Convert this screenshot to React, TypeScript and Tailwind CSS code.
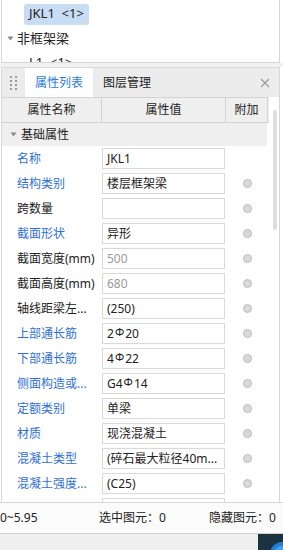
import type { ReactNode } from 'react';

const Rebar = () => <span className="text-[11px] mx-[1px] relative -top-[1px]">Φ</span>;

type Row = { name: string; value: ReactNode; blue?: boolean; muted?: boolean; radio?: boolean };

const rows: Row[] = [
  { name: '名称', value: 'JKL1', blue: true },
  { name: '结构类别', value: '楼层框架梁', blue: true, radio: true },
  { name: '跨数量', value: '', radio: true },
  { name: '截面形状', value: '异形', blue: true, radio: true },
  { name: '截面宽度(mm)', value: '500', muted: true, radio: true },
  { name: '截面高度(mm)', value: '680', muted: true, radio: true },
  { name: '轴线距梁左...', value: '(250)', radio: true },
  { name: '上部通长筋', value: <>2<Rebar />20</>, blue: true, radio: true },
  { name: '下部通长筋', value: <>4<Rebar />22</>, blue: true, radio: true },
  { name: '侧面构造或...', value: <>G4<Rebar />14</>, blue: true, radio: true },
  { name: '定额类别', value: '单梁', blue: true, radio: true },
  { name: '材质', value: '现浇混凝土', blue: true, radio: true },
  { name: '混凝土类型', value: '(碎石最大粒径40m...', blue: true, radio: true },
  { name: '混凝土强度...', value: '(C25)', blue: true, radio: true },
  // partly scrolled out of view: only the top edge of its box shows
  { name: '', value: '', radio: false },
];

function Caret() {
  return (
    <svg width="7" height="5" viewBox="0 0 7 5" className="shrink-0">
      <path d="M0.5 0.5 L6.5 0.5 L3.5 4.5 Z" fill="#8a8a8a" />
    </svg>
  );
}

export default function App() {
  return (
    <div className="w-[283px] h-[550px] bg-white overflow-hidden flex flex-col text-[#222] font-['Noto_Sans','Noto_Sans_CJK_SC',sans-serif]">
      {/* Tree */}
      <div className="h-[63px] ml-[1px] w-[279px] border-l border-r border-b border-[#d6d6d6] pt-[2px] overflow-hidden text-[13px] shrink-0">
        <div className="h-[24px] flex items-center pl-[22px]">
          <div className="h-[21px] px-[5px] flex items-center rounded-[3px] bg-[#c6ddf4]">JKL1&nbsp;&nbsp;&lt;1&gt;</div>
        </div>
        <div className="h-[25px] flex items-center pl-[5px] gap-[3px]">
          <Caret />
          <span>非框架梁</span>
        </div>
        <div className="h-[24px] flex items-center pl-[27px]">L1&nbsp;&nbsp;&lt;1&gt;</div>
      </div>
      <div className="h-[4px] bg-[#f1f1f1] shrink-0" />

      {/* Panel */}
      <div className="ml-[1px] w-[279px] border-l border-r border-[#d6d6d6] flex flex-col shrink-0">
        <div className="h-[30px] bg-[#ececec] border-t border-[#dadada] flex items-stretch text-[12px]">
          <div className="w-[23px] flex items-center justify-center">
            <div className="grid grid-cols-2 gap-x-[3px] gap-y-[2px]">
              {Array.from({ length: 8 }).map((_, i) => (
                <span key={i} className="w-[2px] h-[2px] bg-[#9a9a9a]" />
              ))}
            </div>
          </div>
          <div className="w-[68px] bg-white flex items-center justify-center text-[#2a7ae2]">属性列表</div>
          <div className="w-[68px] flex items-center justify-center">图层管理</div>
          <div className="flex-1" />
          <div className="w-[24px] flex items-center justify-center mr-[2px]">
            <svg width="10" height="10" viewBox="0 0 10 10">
              <path d="M1 1 L9 9 M9 1 L1 9" stroke="#9a9a9a" strokeWidth="1.1" />
            </svg>
          </div>
        </div>

        <div className="flex">
          <div className="w-[267px] flex flex-col">
            {/* header */}
            <div className="h-[26px] flex bg-[#efefef] border-t border-b border-[#d3d3d3] text-[12px]">
              <div className="w-[100px] border-r border-[#d3d3d3] flex items-center justify-center">属性名称</div>
              <div className="w-[124px] border-r border-[#d3d3d3] flex items-center justify-center">属性值</div>
              <div className="w-[42px] border-r border-[#d3d3d3] flex items-center justify-center">附加</div>
            </div>
            {/* body */}
            <div className="h-[379px] overflow-hidden text-[12px]">
              <div className="h-[23px] bg-[#efefef] w-[265px] flex items-center pl-[8px] gap-[4px]">
                <Caret />
                <span>基础属性</span>
              </div>
              {rows.map((r, i) => (
                <div key={i} className="h-[25px] flex items-center">
                  <div className={`w-[100px] pl-[15px] whitespace-nowrap ${r.blue ? 'text-[#2e6fdc]' : 'text-[#222]'}`}>{r.name}</div>
                  <div className="w-[124px] pr-[1px]">
                    <div className={`h-[21px] border border-[#d9d9d9] bg-white flex items-center pl-[4px] whitespace-nowrap overflow-hidden ${r.muted ? 'text-[#9a9a9a]' : 'text-[#222]'}`}>
                      {r.value}
                    </div>
                  </div>
                  <div className="w-[42px] flex items-center justify-center">
                    {r.radio && <span className="w-[9px] h-[9px] rounded-full bg-[#d8d8d8] border border-[#bdbdbd]" />}
                  </div>
                </div>
              ))}
            </div>
          </div>
          {/* scrollbar */}
          <div className="flex-1 flex justify-center pl-[2px]">
            <div className="w-[4px] h-[120px] mt-[13px] rounded-[2px] bg-[#dedede]" />
          </div>
        </div>
      </div>

      {/* Status bar */}
      <div className="h-[31px] border-t border-[#d6d6d6] bg-[#fbfbfb] flex items-center text-[12px] shrink-0">
        <span className="w-[99px]">0~5.95</span>
        <span className="w-[110px]">选中图元：0</span>
        <span>隐藏图元：0</span>
      </div>
      <div className="flex-1 flex border-t border-[#cfcfcf] bg-[#efefef]">
        <div className="flex-1" />
        <div className="w-[25px] bg-[#1b3240] overflow-hidden">
          <svg width="25" height="17" viewBox="0 0 25 17">
            <circle cx="24" cy="20" r="12" fill="#1f7fd6" />
            <circle cx="24" cy="20" r="8" fill="#3ea2ee" />
          </svg>
        </div>
      </div>
    </div>
  );
}
